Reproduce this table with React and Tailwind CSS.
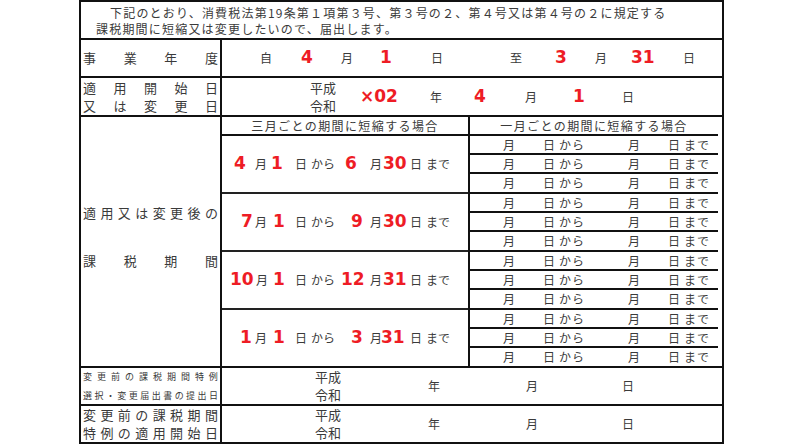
const JP = "font-['Noto_Sans_CJK_JP',sans-serif]";

function Spread({ text, className }) {
  return (
    <div className={"flex justify-between " + className}>
      {[...text].map((c, i) => (
        <span key={i}>{c}</span>
      ))}
    </div>
  );
}

function R({ children }) {
  return (
    <span className="font-['DejaVu_Sans',sans-serif] text-[17px] font-bold leading-none text-[#ee1c25]">
      {children}
    </span>
  );
}

function Cells({ cells }) {
  return cells.map(([w, t, red], i) => (
    <span key={i} className={"shrink-0 whitespace-nowrap " + w}>
      {red ? <R>{t}</R> : t}
    </span>
  ));
}

const periods = [
  {
    pad: "pl-[12px]",
    cells: [
      ["w-[21px]", "4", 1], ["w-[16px]", "月"], ["w-[24px]", "1", 1], ["w-[16px]", "日"],
      ["w-[34px]", "から"], ["w-[25px]", "6", 1], ["w-[13px]", "月"], ["w-[27px]", "30", 1],
      ["w-[16px]", "日"], ["", "まで"],
    ],
  },
  {
    pad: "pl-[19px]",
    cells: [
      ["w-[14px]", "7", 1], ["w-[18px]", "月"], ["w-[22px]", "1", 1], ["w-[16px]", "日"],
      ["w-[40px]", "から"], ["w-[19px]", "9", 1], ["w-[13px]", "月"], ["w-[27px]", "30", 1],
      ["w-[16px]", "日"], ["", "まで"],
    ],
  },
  {
    pad: "pl-[8px]",
    cells: [
      ["w-[26px]", "10", 1], ["w-[17px]", "月"], ["w-[22px]", "1", 1], ["w-[16px]", "日"],
      ["w-[30px]", "から"], ["w-[29px]", "12", 1], ["w-[13px]", "月"], ["w-[27px]", "31", 1],
      ["w-[16px]", "日"], ["", "まで"],
    ],
  },
  {
    pad: "pl-[18px]",
    cells: [
      ["w-[15px]", "1", 1], ["w-[18px]", "月"], ["w-[22px]", "1", 1], ["w-[16px]", "日"],
      ["w-[40px]", "から"], ["w-[19px]", "3", 1], ["w-[11px]", "月"], ["w-[29px]", "31", 1],
      ["w-[16px]", "日"], ["", "まで"],
    ],
  },
];

// heights include the 2px bottom border (border-box)
const monthRows = [
  "h-[19px] border-b-2", "h-[19px] border-b-2", "h-[20px] border-b-2",
  "h-[19px] border-b-2", "h-[19px] border-b-2", "h-[20px] border-b-2",
  "h-[19px] border-b-2", "h-[19px] border-b-2", "h-[20px] border-b-2",
  "h-[19px] border-b-2", "h-[19px] border-b-2", "h-[18px]",
];

function EraDate() {
  return (
    <div className="flex h-full items-center pl-[93px] text-[12px]">
      <span className="w-[113px] shrink-0 text-[13px] leading-[18px]">
        平成
        <br />
        令和
      </span>
      <span className="w-[98px] shrink-0">年</span>
      <span className="w-[96px] shrink-0">月</span>
      <span>日</span>
    </div>
  );
}

export default function App() {
  return (
    <div className={"h-[445px] w-[808px] overflow-hidden bg-white text-[#3a3a3a] " + JP}>
      <div className="ml-[79px] w-[645px] border-2 border-[#111]">
        {/* 前文 */}
        <div className="flex h-[38px] flex-col justify-center border-b-2 border-[#111] pl-[15px] pt-[1px] text-[12px] leading-[16px] tracking-[1.2px] whitespace-nowrap">
          <div className="indent-[14px]">
            下記のとおり、消費税法第19条第１項第３号、第３号の２、第４号又は第４号の２に規定する
          </div>
          <div>課税期間に短縮又は変更したいので、届出します。</div>
        </div>

        {/* 事業年度 */}
        <div className="flex h-[38px] border-b-2 border-[#111]">
          <div className="flex w-[141px] shrink-0 items-center border-r-2 border-[#111] px-[2px] text-[13px]">
            <Spread text="事業年度" className="w-full" />
          </div>
          <div className="flex items-center pl-[38px] text-[12px]">
            <Cells
              cells={[
                ["w-[41px]", "自"], ["w-[40px]", "4", 1], ["w-[39px]", "月"], ["w-[51px]", "1", 1],
                ["w-[79px]", "日"], ["w-[45px]", "至"], ["w-[40px]", "3", 1], ["w-[36px]", "月"],
                ["w-[52px]", "31", 1], ["", "日"],
              ]}
            />
          </div>
        </div>

        {/* 適用開始日 */}
        <div className="flex h-[39px] border-b-2 border-[#111]">
          <div className="flex w-[141px] shrink-0 flex-col justify-center border-r-2 border-[#111] px-[2px] text-[13px] leading-[18px]">
            <Spread text="適用開始日" className="w-full" />
            <Spread text="又は変更日" className="w-full" />
          </div>
          <div className="flex items-center pl-[88px] text-[12px]">
            <span className="w-[50px] shrink-0 text-[13px] leading-[18px]">
              平成
              <br />
              令和
            </span>
            <Cells
              cells={[
                ["w-[70px]", "×02", 1], ["w-[44px]", "年"], ["w-[51px]", "4", 1], ["w-[48px]", "月"],
                ["w-[49px]", "1", 1], ["", "日"],
              ]}
            />
          </div>
        </div>

        {/* 課税期間 */}
        <div className="flex border-b-2 border-[#111]">
          <div className="flex w-[141px] shrink-0 flex-col justify-center gap-[34px] border-r-2 border-[#111] px-[2px] pb-[9px] text-[13px] leading-[14px]">
            <Spread text="適用又は変更後の" className="w-full" />
            <Spread text="課税期間" className="w-full" />
          </div>

          <div className="w-[248px] shrink-0 border-r-2 border-[#111]">
            <div className="flex h-[19px] items-center justify-center border-b-2 border-[#111] text-[12px] tracking-[1.4px]">
              三月ごとの期間に短縮する場合
            </div>
            {periods.map((p, i) => (
              <div
                key={i}
                className={
                  "flex items-center text-[12px] " +
                  p.pad +
                  (i < 3 ? " h-[58px] border-b-2 border-[#222]" : " h-[56px]")
                }
              >
                <Cells cells={p.cells} />
              </div>
            ))}
          </div>

          <div className="w-[248px] shrink-0">
            <div className="flex h-[19px] items-center justify-center border-b-2 border-[#111] text-[12px] tracking-[1.4px]">
              一月ごとの期間に短縮する場合
            </div>
            {monthRows.map((cls, i) => (
              <div key={i} className={"flex items-center border-[#111] pl-[33px] text-[12px] " + cls}>
                <span className="w-[40px] shrink-0">月</span>
                <span className="w-[16px] shrink-0">日</span>
                <span className="w-[69px] shrink-0 tracking-[1px]">から</span>
                <span className="w-[40px] shrink-0">月</span>
                <span className="w-[16px] shrink-0">日</span>
                <span className="tracking-[1px]">まで</span>
              </div>
            ))}
          </div>
        </div>

        {/* 変更前の課税期間特例選択 */}
        <div className="flex h-[38px] border-b-2 border-[#111]">
          <div className="flex w-[141px] shrink-0 flex-col justify-center border-r-2 border-[#111] px-[2px] text-[9px] leading-[19px]">
            <Spread text="変更前の課税期間特例" className="w-full" />
            <Spread text="選択・変更届出書の提出日" className="w-full" />
          </div>
          <div className="flex-1">
            <EraDate />
          </div>
        </div>

        {/* 変更前の課税期間特例の適用開始日 */}
        <div className="flex h-[36px]">
          <div className="flex w-[141px] shrink-0 flex-col justify-center border-r-2 border-[#111] px-[2px] text-[13px] leading-[18px]">
            <Spread text="変更前の課税期間" className="w-full" />
            <Spread text="特例の適用開始日" className="w-full" />
          </div>
          <div className="flex-1">
            <EraDate />
          </div>
        </div>
      </div>
    </div>
  );
}
